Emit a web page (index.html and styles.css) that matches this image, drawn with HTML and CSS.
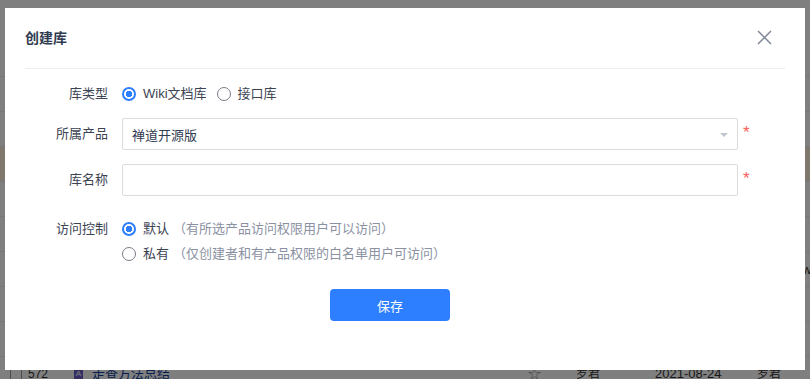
FILE: index.html
```html
<!DOCTYPE html>
<html lang="zh-CN">
<head>
    <meta charset="UTF-8">
    <title>创建库</title>
    <link rel="stylesheet" href="styles.css">
</head>
<body>
    <div class="page">
        <div class="page-top"></div>
        <div class="row"></div>
        <div class="row"></div>
        <div class="row active"></div>
        <div class="row"></div>
        <div class="row"></div>
        <div class="row"><span class="row-end">wiki</span></div>
        <div class="row"></div>
        <div class="row"></div>
        <div class="row last">
            <span class="cell check"><span class="box"></span></span>
            <span class="cell id">572</span>
            <span class="cell name"><span class="doc-icon">A</span><a href="#">走查方法总结</a></span>
            <span class="cell star">☆</span>
            <span class="cell user">罗君</span>
            <span class="cell date">2021-08-24</span>
            <span class="cell user">罗君</span>
        </div>
    </div>

    <div class="mask"></div>

    <div class="modal">
        <div class="modal-header">
            <h4 class="modal-title">创建库</h4>
            <button class="close" type="button">
                <svg width="15" height="15" viewBox="0 0 15 15"><path d="M1 1L14 14M14 1L1 14" stroke="#7f879a" stroke-width="1.5" fill="none"/></svg>
            </button>
        </div>

        <form class="lib-form">
            <div class="form-row radio-row">
                <div class="form-label">库类型</div>
                <div class="form-control">
                    <label class="radio"><input type="radio" name="type" checked> Wiki文档库</label>
                    <label class="radio"><input type="radio" name="type"> 接口库</label>
                </div>
            </div>

            <div class="form-row">
                <div class="form-label">所属产品</div>
                <div class="form-control">
                    <div class="select">
                        <span>禅道开源版</span>
                        <span class="caret"></span>
                    </div>
                </div>
                <div class="required">*</div>
            </div>

            <div class="form-row">
                <div class="form-label">库名称</div>
                <div class="form-control">
                    <input type="text" class="input">
                </div>
                <div class="required">*</div>
            </div>

            <div class="form-row acl-row">
                <div class="form-label">访问控制</div>
                <div class="form-control acl">
                    <label class="radio"><input type="radio" name="acl" checked> 默认 <span class="hint">（有所选产品访问权限用户可以访问）</span></label>
                    <label class="radio"><input type="radio" name="acl"> 私有 <span class="hint">（仅创建者和有产品权限的白名单用户可访问）</span></label>
                </div>
            </div>

            <div class="form-actions">
                <button type="submit" class="btn-primary">保存</button>
            </div>
        </form>
    </div>
</body>
</html>
```

FILE: styles.css
```css
* {
    box-sizing: border-box;
    margin: 0;
    padding: 0;
}

body {
    font-family: "Liberation Sans", "Noto Sans CJK SC", sans-serif;
    font-size: 13px;
    color: #3c4353;
    background: #fff;
    overflow: hidden;
    height: 379px;
}

/* page behind the dialog */
.page {
    height: 379px;
    overflow: hidden;
}

.page-top {
    height: 77px;
    border-bottom: 1px solid #eee;
}

.row {
    height: 35px;
    border-bottom: 1px solid #eee;
    display: flex;
    align-items: flex-start;
    font-size: 12px;
    color: #333;
}

.row.active {
    background: #fff0dc;
}

.row-end {
    margin-left: auto;
    margin-right: -14px;
    line-height: 35px;
    font-size: 13px;
}

.row.last {
    padding-top: 9px;
    line-height: 16px;
}

.cell {
    flex-shrink: 0;
}

.cell.check {
    width: 28px;
    padding-left: 10px;
}

.box {
    display: block;
    width: 12px;
    height: 12px;
    border: 1px solid #999;
    border-radius: 2px;
    margin-top: 2px;
}

.cell.id {
    width: 46px;
}

.cell.name {
    width: 454px;
    display: flex;
    align-items: center;
}

.doc-icon {
    width: 9px;
    height: 12px;
    background: #6c5fc7;
    color: #fff;
    font-size: 8px;
    line-height: 12px;
    text-align: center;
    margin-right: 9px;
}

.cell.name a {
    color: #0c3e9c;
    text-decoration: none;
    font-size: 13px;
}

.cell.star {
    width: 48px;
    color: #888;
    font-size: 13px;
}

.cell.user {
    width: 79px;
}

.cell.date {
    width: 102px;
    font-size: 13px;
}

.mask {
    position: fixed;
    inset: 0;
    background: rgba(0, 0, 0, 0.5);
}

/* dialog */
.modal {
    position: fixed;
    left: 5px;
    top: 8px;
    width: 800px;
    background: #fff;
    padding: 0 20px 49px;
}

.modal-header {
    display: flex;
    justify-content: space-between;
    align-items: center;
    padding: 20px 0;
    border-bottom: 1px solid #eee;
    height: 61px;
}

.modal-title {
    font-size: 14px;
    line-height: 20px;
    font-weight: bold;
    color: #313c52;
}

.close {
    border: none;
    background: none;
    width: 15px;
    height: 15px;
    margin-right: 13px;
    margin-top: -1px;
    cursor: pointer;
    display: flex;
}

.lib-form {
    width: 730px;
    padding-top: 15px;
}

.form-row {
    display: grid;
    grid-template-columns: 97px 616px 17px;
    margin-bottom: 14px;
}

.form-label {
    text-align: right;
    padding-right: 14px;
    line-height: 32px;
    color: #3c4353;
}

.radio-row .form-label {
    line-height: 20px;
}

.form-control {
    display: flex;
    align-items: center;
}

.radio {
    display: inline-flex;
    align-items: center;
    gap: 6px;
    line-height: 20px;
    margin-right: 10px;
    color: #3c4353;
    cursor: pointer;
}

.radio input {
    appearance: none;
    width: 14px;
    height: 14px;
    border: 1px solid #777c87;
    border-radius: 50%;
    margin: 0 1px 0 0;
    background: #fff;
}

.radio input:checked {
    border: 2px solid #2e7fff;
    background: radial-gradient(circle, #2e7fff 0 3px, #fff 3.5px);
}

.select,
.input {
    width: 100%;
    height: 32px;
    border: 1px solid #dcdcdc;
    border-radius: 2px;
    background: #fff;
}

.select {
    display: flex;
    align-items: center;
    justify-content: space-between;
    padding: 0 9px 0 9px;
    color: #313c52;
}

.caret {
    width: 0;
    height: 0;
    border-left: 4px solid transparent;
    border-right: 4px solid transparent;
    border-top: 4px solid #c0c5d0;
    margin-top: 1px;
}

.input {
    padding: 0 9px;
    font-size: 13px;
    outline: none;
}

.required {
    color: #ff5d5d;
    font-size: 17px;
    line-height: 32px;
    padding-left: 5px;
    margin-top: -1px;
}

.acl-row {
    margin-top: 20px;
    margin-bottom: 23px;
}

.acl-row .form-label {
    line-height: 25px;
}

.acl {
    flex-direction: column;
    align-items: flex-start;
}

.acl .radio {
    line-height: 25px;
}

.hint {
    color: #8b91a2;
    margin-left: -2px;
}

.form-actions {
    display: flex;
    justify-content: center;
}

.btn-primary {
    width: 120px;
    height: 32px;
    border: none;
    border-radius: 4px;
    background: #2e7fff;
    color: #fff;
    font-family: "Liberation Sans", "Noto Sans CJK SC", sans-serif;
    font-size: 13px;
    cursor: pointer;
}
```
